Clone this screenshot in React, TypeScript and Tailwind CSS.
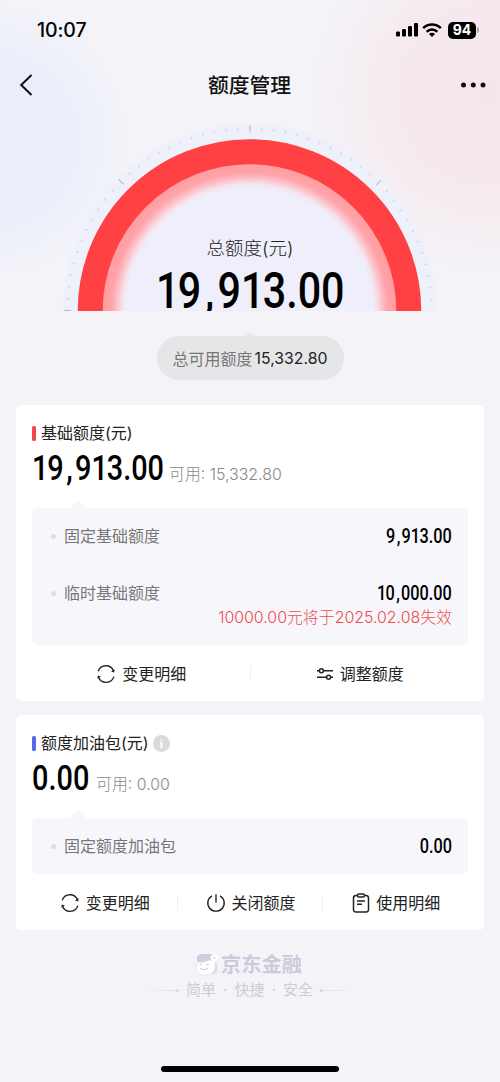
import type { ReactNode } from "react";
import clsx from "clsx";

type AmountProps = {
  value: string;
  className?: string;
};

// Condensed numerals with a wide comma and a narrow "1", used for every money amount
function Amount({ value, className }: AmountProps) {
  return (
    <span className={clsx("block font-['Roboto',sans-serif] font-medium whitespace-nowrap text-black scale-x-[0.825]", className)}>
      {value.split("").map((char, i) => (
        <span key={i} className={clsx(char === "1" && "tracking-[-0.04em]", char === "," && "pr-[0.08em] pl-[0.09em]")}>
          {char}
        </span>
      ))}
    </span>
  );
}

function StatusBar() {
  return (
    <div className="flex h-[60px] items-center justify-between pr-[21px] pl-[37px]">
      <span className="mt-[2px] font-['Inter',sans-serif] text-[19.5px] font-medium tracking-[-0.1px] text-black">10:07</span>
      <div className="flex items-center">
        <svg width="24" height="16" viewBox="0 0 24 16">
          <rect x="0" y="9.5" width="4" height="5" rx="1.2" />
          <rect x="6" y="7" width="4" height="7.5" rx="1.2" />
          <rect x="12" y="4" width="4" height="10.5" rx="1.2" />
          <rect x="18" y="1" width="4" height="13.5" rx="1.2" />
        </svg>
        <svg className="mr-px ml-[2px]" width="20" height="16" viewBox="0 0 20 16" fill="none" stroke="#000" strokeWidth="2.6">
          <path d="M1.2 6.1a12.6 12.6 0 0 1 17.6 0" />
          <path d="M4.7 9.7a7.6 7.6 0 0 1 10.6 0" />
          <path d="M7 12.1a4.3 4.3 0 0 1 6 0L10 15z" fill="#000" stroke="none" />
        </svg>
        <span className="ml-[5px] flex h-[17px] w-7 items-center justify-center rounded-[5px] bg-black font-['Inter',sans-serif] text-sm leading-none font-bold text-white">
          94
        </span>
        <span className="ml-px h-[6px] w-[2px] rounded-r-full bg-[#aaa6ac]" />
      </div>
    </div>
  );
}

function NavBar() {
  return (
    <div className="flex h-[50px] items-center justify-between pr-[14px] pl-[19px]">
      <svg width="20" height="22" viewBox="0 0 20 22" fill="none" stroke="#111" strokeWidth="2">
        <path d="M12.5 1 2.2 11l10.3 10" />
      </svg>
      <h1 className="mt-px text-[20.8px] font-medium text-[#111]">额度管理</h1>
      <svg width="26" height="6" viewBox="0 0 26 6" fill="#111">
        <circle cx="3.5" cy="3" r="2.5" />
        <circle cx="13.3" cy="3" r="2.5" />
        <circle cx="23" cy="3" r="2.5" />
      </svg>
    </div>
  );
}

function Gauge() {
  const ticks = Array.from({ length: 49 }, (_, i) => i);
  return (
    <div className="relative h-[201px]">
      <svg width="500" height="201" viewBox="0 110 500 201" className="block">
        <defs>
          <radialGradient id="glow" gradientUnits="userSpaceOnUse" cx="249.5" cy="311" r="148">
            <stop offset="0.83" stopColor="#eeeffb" />
            <stop offset="0.86" stopColor="#f6e2ed" />
            <stop offset="0.9" stopColor="#fdbdc5" />
            <stop offset="0.935" stopColor="#ffa3a9" />
            <stop offset="1" stopColor="#ff9ca1" />
          </radialGradient>
        </defs>
        <circle cx="249.5" cy="311" r="187" fill="#eff1fa" />
        {ticks.map((i) => {
          const major = i % 12 === 0;
          return (
            <line
              key={i}
              x1={major ? 64 : 66}
              x2={major ? 71 : 69}
              y1="310.5"
              y2="310.5"
              stroke={major ? "#b9bccb" : "#d8d8e7"}
              strokeWidth={major ? 1.2 : 1.4}
              transform={`rotate(${i * 3.75} 249.5 311)`}
            />
          );
        })}
        <circle cx="249.5" cy="311" r="148" fill="url(#glow)" />
        <circle cx="249.5" cy="311" r="159.3" fill="none" stroke="#ff4144" strokeWidth="25" />
      </svg>
      <div className="absolute inset-x-0 top-[124px] flex flex-col items-center">
        <span className="text-[18.5px] leading-7 font-light text-[#222]">总额度(元)</span>
        <Amount value="19,913.00" className="mt-[9px] text-[50px] leading-10 [clip-path:inset(0)]" />
      </div>
    </div>
  );
}

function RefreshIcon() {
  return (
    <svg width="20" height="20" viewBox="0 0 20 20" fill="none" stroke="#222" strokeWidth="1.4">
      <path d="M2.2 7.2A8.2 8.2 0 0 1 17.6 7" />
      <path d="M17.9 12.6A8.2 8.2 0 0 1 2.4 13" />
      <path d="m18.6 5.2-.4 3.3-3.2-1.1zM1.4 14.8l.4-3.3L5 12.6z" fill="#222" stroke="none" />
    </svg>
  );
}

function AdjustIcon() {
  return (
    <svg width="18" height="14" viewBox="0 0 18 14" fill="none" stroke="#222" strokeWidth="1.5">
      <path d="M1 3.8h2.4M7.4 3.8H17M1 10.3h9.6M14.6 10.3H17" />
      <circle cx="5.4" cy="3.8" r="2" />
      <circle cx="12.6" cy="10.3" r="2" />
    </svg>
  );
}

function PowerIcon() {
  return (
    <svg width="20" height="20" viewBox="0 0 20 20" fill="none" stroke="#222" strokeWidth="1.4">
      <path d="M10 1.2v8.3M6 2.8a8.2 8.2 0 1 0 8 0" />
    </svg>
  );
}

function ClipboardIcon() {
  return (
    <svg width="18" height="20" viewBox="0 0 18 20" fill="none" stroke="#222" strokeWidth="1.5">
      <path d="M5.5 2.6H4A2.5 2.5 0 0 0 1.5 5v11.6A2.2 2.2 0 0 0 3.7 19h10.6a2.2 2.2 0 0 0 2.2-2.4V5A2.5 2.5 0 0 0 14 2.6h-1.5" />
      <rect x="5.5" y="1" width="7" height="3" rx="1.3" />
      <path d="M5 8h8M5 11.3h5" />
    </svg>
  );
}

type ActionProps = {
  icon: ReactNode;
  label: string;
};

function Action({ icon, label }: ActionProps) {
  return (
    <button className="flex flex-1 items-center justify-center gap-[6px] pl-px text-base leading-6 text-[#222]">
      {icon}
      {label}
    </button>
  );
}

function Separator() {
  return <span className="h-4 w-px bg-[#efeff2]" />;
}

function PanelArrow({ className }: { className?: string }) {
  return (
    <svg className={clsx("block", className)} width="20" height="8" viewBox="0 0 20 8">
      <path d="M0 8C5 8 6 1 10 1s5 7 10 7z" fill="currentColor" />
    </svg>
  );
}

function DetailRow({ label, value }: { label: string; value: string }) {
  return (
    <div className="flex h-[56px] items-center">
      <span className="ml-[3px] size-[5px] rounded-full bg-[#dddde2]" />
      <span className="ml-2 flex-1 text-base text-[#777]">{label}</span>
      <Amount value={value} className="mt-[2px] origin-right text-[19.7px]" />
    </div>
  );
}

function Footer() {
  return (
    <footer className="mt-6 flex flex-col items-center text-[#cbcbdc]">
      <div className="flex h-[22px] items-center gap-[2px] pr-[3px]">
        <svg width="24" height="24" viewBox="0 0 24 24">
          <path d="M2 8C1 3 3 1 8 1h8c2 0 3 1 3 3v5H2z" fill="#cdcddd" />
          <path d="M4 21h16c3-1 3-9 1-12l-3-1v10z" fill="#dcdce8" />
          <path d="M2 9c5 1 10-1 13-2 2 1 4 1 5 0 1 5 0 11-3 13-4 2-10 3-13 1-3-3-3-8-2-12z" fill="#fff" stroke="#dcdce8" strokeWidth=".7" />
          <circle cx="19.3" cy="4.8" r="3.6" fill="#fff" />
          <circle cx="19.3" cy="4.8" r="1" fill="#cdcddd" />
          <path d="M4.5 11.5h2M11.5 11.5h2M5.5 15c2 2 5 2 7 0" fill="none" stroke="#cdcddd" strokeWidth="1.4" />
        </svg>
        <span className="text-[20.3px] leading-[22px] font-bold">京东金融</span>
      </div>
      <div className="mt-[2px] flex items-center pr-px">
        <span className="h-px w-[34px] bg-linear-to-r from-transparent to-[#dedee9]" />
        <span className="size-[3px] rounded-full bg-[#d5d5e2]" />
        <span className="mx-[7px] text-[15px] leading-6 whitespace-pre">简单<span className="inline-block w-[18.5px] text-center">·</span>快捷<span className="inline-block w-[18.5px] text-center">·</span>安全</span>
        <span className="size-[3px] rounded-full bg-[#d5d5e2]" />
        <span className="h-px w-[34px] bg-linear-to-l from-transparent to-[#dedee9]" />
      </div>
    </footer>
  );
}

export default function App() {
  return (
    <div className="flex h-[1082px] w-[500px] flex-col overflow-hidden bg-[#f4f4f8] bg-[radial-gradient(circle_at_-10px_140px,#eaeefb_0,#ebeefa_80px,#f4f4f800_145px),radial-gradient(circle_at_490px_95px,#f5e6ed_0,#f5e8ee_80px,#f4f4f800_190px)] font-['Inter','Noto_Sans_CJK_SC',sans-serif]">
      <StatusBar />
      <NavBar />
      <Gauge />

      <div className="mt-[21px] flex flex-col items-center">
        <PanelArrow className="-mb-1 text-[#e6e6e9]" />
        <div className="flex h-11 w-[187px] items-center justify-center gap-[2px] rounded-full bg-[#e6e6e9] pt-px">
          <span className="text-base text-[#777]">总可用额度</span>
          <span className="mt-px text-[15.8px] text-[#222]">15,332.80</span>
        </div>
      </div>

      <section className="mx-4 mt-[25px] h-[296px] rounded-[5px] bg-white px-4">
        <div className="flex items-center pt-4">
          <span className="h-[15px] w-1 rounded-[1.5px] bg-[#f5484c]" />
          <h2 className="ml-[5px] text-base leading-6 text-[#222]">基础额度(元)</h2>
        </div>
        <div className="flex h-[46px] items-center">
          <Amount value="19,913.00" className="mt-[2px] w-[137px] origin-left text-[35px]" />
          <span className="mt-[14px] text-[15.9px] font-light text-[#888]">可用: 15,332.80</span>
        </div>
        <PanelArrow className="mt-[9px] ml-9 text-[#f7f7fb]" />
        <div className="h-[137px] rounded-[5px] bg-[#f7f7fb] px-4">
          <DetailRow label="固定基础额度" value="9,913.00" />
          <div className="h-px bg-[#f2f2f6]" />
          <DetailRow label="临时基础额度" value="10,000.00" />
          <p className="-mt-[15px] text-right text-[15.9px] leading-6 font-light whitespace-nowrap text-[#ec4a4f]">10000.00元将于2025.02.08失效</p>
        </div>
        <div className="flex h-14 items-center pt-px">
          <Action icon={<RefreshIcon />} label="变更明细" />
          <Separator />
          <Action icon={<AdjustIcon />} label="调整额度" />
        </div>
      </section>

      <section className="mx-4 mt-[14px] h-[215px] rounded-[5px] bg-white px-4">
        <div className="flex items-center pt-4">
          <span className="h-[15px] w-1 rounded-[1.5px] bg-[#5a68ea]" />
          <h2 className="ml-[5px] text-base leading-6 text-[#222]">额度加油包(元)</h2>
          <span className="ml-1 flex size-[17px] items-center justify-center rounded-full bg-[#dadada] font-['Liberation_Serif',serif] text-[13px] leading-none font-bold text-white">
            i
          </span>
        </div>
        <div className="flex h-[46px] items-center">
          <Amount value="0.00" className="mt-[2px] w-16 origin-left text-[35px]" />
          <span className="mt-[14px] text-[15.9px] font-light text-[#888]">可用: 0.00</span>
        </div>
        <PanelArrow className="mt-[9px] ml-9 text-[#f7f7fb]" />
        <div className="h-[56px] rounded-[5px] bg-[#f7f7fb] px-4">
          <DetailRow label="固定额度加油包" value="0.00" />
        </div>
        <div className="flex h-14 items-center pt-px">
          <Action icon={<RefreshIcon />} label="变更明细" />
          <Separator />
          <Action icon={<PowerIcon />} label="关闭额度" />
          <Separator />
          <Action icon={<ClipboardIcon />} label="使用明细" />
        </div>
      </section>

      <Footer />
      <div className="mx-auto mt-auto mb-[10px] h-[6px] w-[178px] shrink-0 rounded-full bg-black" />
    </div>
  );
}
